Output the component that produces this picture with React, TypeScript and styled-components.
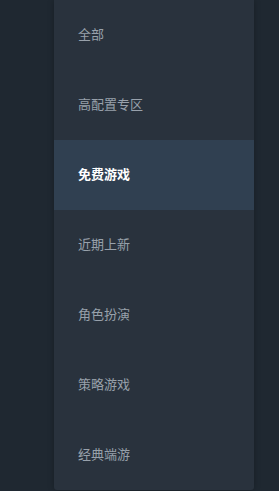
import React from "react";
import styled, { createGlobalStyle } from "styled-components";

const Global = createGlobalStyle`
  html, body { margin: 0; padding: 0; background: #1f2831; }
  body { font-family: "Noto Sans CJK SC", "Noto Sans", sans-serif; }
`;

const Page = styled.div`
  width: 279px;
  height: 491px;
  display: flex;
  justify-content: flex-start;
  padding-left: 54px;
  box-sizing: border-box;
  background: #1f2831;
`;

const Menu = styled.ul`
  list-style: none;
  margin: 0;
  padding: 0;
  width: 200px;
  height: 490px;
  background: #29323d;
  border-radius: 0 0 3px 3px;
  box-shadow: 0 0 6px rgba(0, 0, 0, 0.25);
  display: flex;
  flex-direction: column;
`;

const Item = styled.li<{ $active?: boolean }>`
  height: 70px;
  box-sizing: border-box;
  display: flex;
  align-items: center;
  padding: 0 0 3px 24px;
  line-height: 1;
  font-size: 13px;
  color: ${(p) => (p.$active ? "#ffffff" : "#98a1ab")};
  font-weight: ${(p) => (p.$active ? 700 : 400)};
  background: ${(p) => (p.$active ? "#304051" : "transparent")};
`;

const items = ["全部", "高配置专区", "免费游戏", "近期上新", "角色扮演", "策略游戏", "经典端游"];

export default function App() {
  return (
    <>
      <Global />
      <Page>
        <Menu>
          {items.map((t, i) => (
            <Item key={t} $active={i === 2}>
              {t}
            </Item>
          ))}
        </Menu>
      </Page>
    </>
  );
}
